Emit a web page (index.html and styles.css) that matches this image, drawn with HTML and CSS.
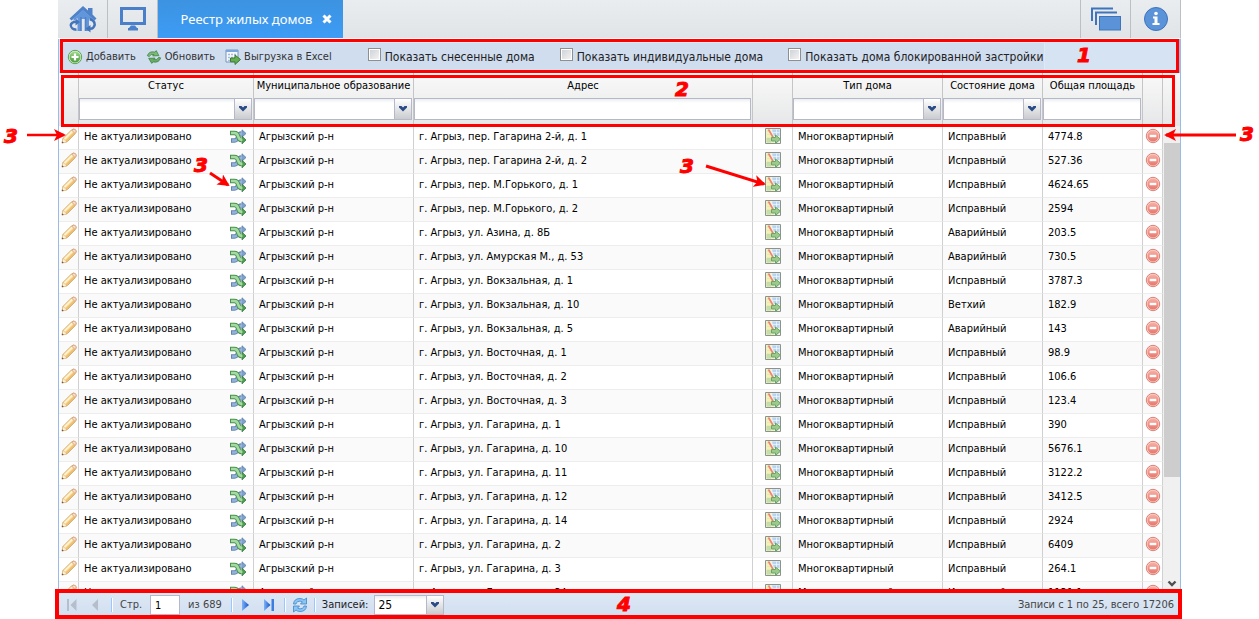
FILE: index.html
```
<!DOCTYPE html>
<html lang="ru">
<head>
<meta charset="utf-8">
<title>Реестр жилых домов</title>
<link rel="stylesheet" href="styles.css">
</head>
<body>
<svg class="defs" aria-hidden="true">
  <defs>
    <linearGradient id="gGreen" x1="0" y1="0" x2="0" y2="1"><stop offset="0" stop-color="#a5d893"/><stop offset="1" stop-color="#4c9a3e"/></linearGradient>
    <linearGradient id="gRed" x1="0" y1="0" x2="0" y2="1"><stop offset="0" stop-color="#f8b0a6"/><stop offset="1" stop-color="#e8776b"/></linearGradient>
    <linearGradient id="gBlue" x1="0" y1="0" x2="1" y2="0"><stop offset="0" stop-color="#7fb4f8"/><stop offset="1" stop-color="#1550c8"/></linearGradient>
    <marker id="head" viewBox="0 0 12 12" refX="10" refY="6" markerWidth="12" markerHeight="12" markerUnits="userSpaceOnUse" orient="auto"><path d="M0 0L12 6L0 12L3 6Z" fill="#f00"/></marker>
    <symbol id="pencil" viewBox="0 0 16 16"><path d="M1 15L2 10.500L10.500 2Q12.500 .3 14.500 1.800Q16 3.500 14.300 5.500L6 13.800Z" fill="#f5d08c" stroke="#cfa060"/><path d="M3.500 11L11.300 3.200" stroke="#fff3cd" stroke-width="2"/><path d="M5.500 13L13.300 5.200" stroke="#eebb6b" stroke-width="1.200"/><path d="M10.800 2.200L14 5.300L15 4.300Q15.500 2.500 13.800 1.300Q12.200 .8 10.800 2.200Z" fill="#f8dccb" stroke="#d0a080" stroke-width=".7"/><path d="M1 15L2 11L5.300 14Z" fill="#fdf0dc"/><path d="M.8 15.200L1.300 13.200L2.800 14.700Z" fill="#6b543c"/></symbol>
    <symbol id="shuffle" viewBox="0 0 16 16"><path d="M1 11.500H4.500Q7 11.500 8 8Q9 4.500 11.500 4.500" fill="none" stroke="#6484b0" stroke-width="4.400"/><path d="M12 .8L16 4.500L12 8.200Z" fill="#7da0cc" stroke="#5d7eab" stroke-width=".8"/><path d="M2 11.500H4.500Q7 11.500 8 8Q9 4.500 12.500 4.500" fill="none" stroke="#94b2da" stroke-width="2.600"/><path d="M0 4H4.500Q7.300 4 8.200 7.500Q9 11 11.500 11" fill="none" stroke="#4a9151" stroke-width="4.400"/><path d="M12 7.200L16 11L12 14.800Z" fill="#4b9f52" stroke="#357a3d" stroke-width=".8"/><path d="M1 4H4.500Q7.300 4 8.200 7.500Q9 11 12.500 11" fill="none" stroke="#a3dba0" stroke-width="2.600"/></symbol>
    <symbol id="map" viewBox="0 0 16 16"><path d="M.5.5H15.500V15.500H.5Z" fill="#f1f3e4" stroke="#8b938f"/><path d="M1.500 1.500H5L9 14.500H1.500Z" fill="#eeeaa5"/><path d="M7 1.500H14.500V8H9Z" fill="#b9d3f2"/><path d="M1.500 10H6V14.500H1.500Z" fill="#c5dda7"/><path d="M8 4.500H14.500M11.500 1.500V8M1.500 5H5M1.500 8H6" stroke="#fff" stroke-opacity=".6"/><path d="M3.500 1.500L8.500 10" stroke="#ee8374" stroke-width="1.600"/><path d="M6.500 9.500H10.500V7L15.500 11.200L10.500 15.400V13H6.500Z" fill="#9cc98e" stroke="#6ba565"/></symbol>
    <symbol id="remove" viewBox="0 0 16 16"><circle cx="8" cy="8" r="6.700" fill="#f8d0ca" stroke="#d9837a"/><circle cx="8" cy="8" r="5.500" fill="url(#gRed)"/><rect x="4.700" y="6.800" width="6.600" height="2.400" fill="#fff"/></symbol>
    <symbol id="chev" viewBox="0 0 16 16"><path d="M4 5H6.500L8 6.500L9.500 5H12V6.500L8 10.500L4 6.500Z" fill="#2a4b87"/></symbol>
  </defs>
</svg>

<main class="app">
  <nav class="tabs">
    <button class="tab" aria-label="Главная"><svg width="30" height="28" viewBox="0 0 30 28"><path d="M1.500 13.500L15 1L20 5.500V3H24.500V9.500L28.500 13.500L26.500 15.500L15 5.500L3.500 15.500Z" fill="#4f82c8"/><path d="M5.500 13.500L15 5L24.500 13.500V16L21 13V26H17.500V14H13V26H9.500V13L5.500 16Z" fill="#6296dc"/><path d="M13 12V26M17.500 12V26" stroke="#4f82c8" stroke-width="1.600"/><path d="M8.500 23.500Q3.500 23 4 20Q5 18 7.500 18V20.500L12 17L7.500 13.500V15.500Q2 16 1.500 20Q2 25.500 8.500 26Z" fill="#4475bb"/><path d="M21.500 12.500Q28.500 14.500 28 20Q26.500 25 22.500 25V27.500L17.500 23.500L22.500 20V22.500Q25 22 25.500 19.500Q25 16 21.500 15.500Z" fill="#4475bb"/></svg></button>
    <button class="tab" aria-label="Рабочий стол"><svg width="28" height="26" viewBox="0 0 28 26"><path d="M2.500 2.500H25.500V17.500H2.500Z" fill="none" stroke="#4a7fc9" stroke-width="3"/><path d="M12 19.500H16L18 22H19V24.500H9V22H10Z" fill="#4a7fc9"/></svg></button>
    <button class="tab active">Реестр жилых домов<svg width="10" height="10" viewBox="0 0 10 10"><path d="M1.500 1.500L8.500 8.500M8.500 1.500L1.500 8.500" stroke="#fff" stroke-width="3"/></svg></button>
    <span class="grow"></span>
    <button class="tab right" aria-label="Окна"><svg width="30" height="24" viewBox="0 0 30 24"><path d="M1 14V1.500H22M5 18V5.500H26" fill="none" stroke="#3f74bd" stroke-width="2"/><rect x="8.500" y="9.500" width="21" height="13.500" fill="#5b93d8" stroke="#3f74bd"/></svg></button>
    <button class="tab right" aria-label="Справка"><svg width="24" height="24" viewBox="0 0 24 24"><circle cx="12" cy="12" r="11.500" fill="#5b93d9" stroke="#3d72bd"/><circle cx="12" cy="6.500" r="1.800" fill="#fff"/><path d="M9 9.500H13.500V16H15.500V18H8.500V16H10.500V11.500H9Z" fill="#fff"/></svg></button>
  </nav>

  <section class="toolbar">
    <div class="tools">
      <button><svg width="16" height="16" viewBox="0 0 16 16"><circle cx="8" cy="8" r="6.700" fill="#d8efd2" stroke="#5da34f"/><circle cx="8" cy="8" r="5.500" fill="url(#gGreen)"/><path d="M8 4.500V11.500M4.500 8H11.500" stroke="#fff" stroke-width="2.200"/></svg>Добавить</button>
      <button><svg width="16" height="16" viewBox="0 0 18 16"><path d="M1.500 6.500Q3.500 1 10 2.500L11.500 .8L14.500 6.500L7.500 6.800L9 5.200Q5.500 4 3.500 7.500Z" fill="#7dbb78" stroke="#3f8444" stroke-width=".9"/><path d="M16.500 9Q14.500 15 8 13.500L6.500 15.200L3 9.500L10.200 9.200L8.800 10.800Q12.500 12 14.500 8.200Z" fill="#68ad66" stroke="#3f8444" stroke-width=".9"/></svg>Обновить</button>
      <button><svg width="16" height="16" viewBox="0 0 16 16"><path d="M1 1H13V13H1Z" fill="#f5f9ff" stroke="#7594bd"/><path d="M1 2H13" stroke="#7ba5dc" stroke-width="2"/><path d="M3 5.500H11.500M3 8.500H11.500M3 11.500H11.500" stroke="#a8bbd6" stroke-width="1.400" stroke-dasharray="2 1"/><path d="M5.500 9H10V6L15.500 10.500L10 15.500V12.800H5.500Z" fill="#65ad51" stroke="#3c7b35"/></svg>Выгрузка в Excel</button>
      <label class="c1"><input type="checkbox">Показать снесенные дома</label>
      <label><input type="checkbox">Показать индивидуальные дома</label>
      <label><input type="checkbox">Показать дома блокированной застройки</label>
    </div>
  </section>

  <table class="grid head">
    <colgroup><col class="w20"><col class="w175"><col class="w160"><col><col class="w40"><col class="w150"><col class="w100"><col class="w100"><col class="w20"><col class="w17"></colgroup>
    <thead><tr>
      <th></th>
      <th><label for="f1">Статус</label><span class="combo"><input id="f1"><button aria-label="Открыть"><svg width="16" height="16"><use href="#chev"/></svg></button></span></th>
      <th><label for="f2">Муниципальное образование</label><span class="combo"><input id="f2"><button aria-label="Открыть"><svg width="16" height="16"><use href="#chev"/></svg></button></span></th>
      <th><label for="f3">Адрес</label><span class="combo"><input id="f3"></span></th>
      <th></th>
      <th><label for="f4">Тип дома</label><span class="combo"><input id="f4"><button aria-label="Открыть"><svg width="16" height="16"><use href="#chev"/></svg></button></span></th>
      <th><label for="f5">Состояние дома</label><span class="combo"><input id="f5"><button aria-label="Открыть"><svg width="16" height="16"><use href="#chev"/></svg></button></span></th>
      <th><label for="f6">Общая площадь</label><span class="combo"><input id="f6"></span></th>
      <th></th><th></th>
    </tr></thead>
  </table>

  <div class="viewport">
    <table class="grid body">
      <colgroup><col class="w20"><col class="w175"><col class="w160"><col><col class="w40"><col class="w150"><col class="w100"><col class="w100"><col class="w20"></colgroup>
      <tbody id="rows"></tbody>
    </table>
    <div class="scroll"><span class="thumb"></span><svg width="16" height="14" viewBox="0 0 16 14"><path d="M4.500 5.500L8 9L11.500 5.500" fill="none" stroke="#505050" stroke-width="2.400"/></svg></div>
  </div>

  <footer class="pager">
    <button class="p1" aria-label="Первая"><svg width="16" height="16" viewBox="0 0 16 16"><path d="M3 2H5V14H3ZM12.500 2V14L6.500 8Z" fill="#b5bfcb"/></svg></button>
    <button class="p2" aria-label="Назад"><svg width="16" height="16" viewBox="0 0 16 16"><path d="M11 2V14L5 8Z" fill="#b5bfcb"/></svg></button>
    <i></i>
    <label class="page" for="pg">Стр.</label><input id="pg" value="1"><span class="of">из 689</span>
    <i></i>
    <button class="p3" aria-label="Вперёд"><svg width="16" height="16" viewBox="0 0 16 16"><path d="M5 2V14L12 8Z" fill="url(#gBlue)"/></svg></button>
    <button class="p3 last" aria-label="Последняя"><svg width="16" height="16" viewBox="0 0 16 16"><path d="M3 2V14L9.500 8Z" fill="url(#gBlue)"/><path d="M10.500 2H13V14H10.500Z" fill="#3d7de0"/></svg></button>
    <i></i>
    <button class="p4" aria-label="Обновить"><svg width="16" height="16" viewBox="0 0 16 16"><path d="M1.500 7Q2 1.500 8 1.500Q10.500 1.500 12 3L14.500 1V7H8.500L10.400 4.900Q8 3.500 5.800 4.600Q4.200 5.500 4 7Z" fill="#8cc4f2" stroke="#3b86cb" stroke-width=".8"/><path d="M14.500 9Q14 14.500 8 14.500Q5.500 14.500 4 13L1.500 15V9H7.500L5.600 11.100Q8 12.500 10.200 11.400Q11.800 10.500 12 9Z" fill="#8cc4f2" stroke="#3b86cb" stroke-width=".8"/></svg></button>
    <i></i>
    <label class="size" for="ps">Записей:</label>
    <span class="combo small"><input id="ps" value="25"><button aria-label="Открыть"><svg width="16" height="16"><use href="#chev"/></svg></button></span>
    <span class="total">Записи с 1 по 25, всего 17206</span>
  </footer>

  <div class="frame f-tools"></div>
  <div class="frame f-head"></div>
  <div class="frame f-pager"></div>
  <span class="mark m1">1</span>
  <span class="mark m2">2</span>
  <span class="mark m3a">3</span>
  <span class="mark m3b">3</span>
  <span class="mark m3c">3</span>
  <span class="mark m3d">3</span>
  <span class="mark m4">4</span>
  <svg class="arrow a1" width="42" height="14"><path d="M0 7H37" stroke="#f00" stroke-width="2.500" marker-end="url(#head)"/></svg>
  <svg class="arrow a2" width="30" height="24"><path d="M3 5L21 17" stroke="#f00" stroke-width="3" marker-end="url(#head)"/></svg>
  <svg class="arrow a3" width="64" height="30"><path d="M2 4L60 22" stroke="#f00" stroke-width="3" marker-end="url(#head)"/></svg>
  <svg class="arrow a4" width="76" height="14"><path d="M74 7H4" stroke="#f00" stroke-width="3" marker-end="url(#head)"/></svg>
</main>
<script src="rows.js"></script>
</body>
</html>
```
FILE: styles.css
```
* { box-sizing: border-box; }
body { margin: 0; background: #fff; color: #000; font: 11px/14px "DejaVu Sans Condensed", "DejaVu Sans", sans-serif; }
button, input { font: inherit; color: inherit; margin: 0; }
button { border: 0; padding: 0; background: none; display: flex; align-items: center; }
svg { display: block; flex: none; }
.defs { position: absolute; width: 0; height: 0; }
.app { position: relative; display: flex; flex-direction: column; height: 100vh; margin: 0 78px 0 58px; }
.grow { flex: 1; }

.tabs { display: flex; height: 39px; flex: none; background: linear-gradient(#e9edf0, #e0e4e6); border-bottom: 1px solid #fff; border-right: 1px solid #bcc0c3; }
.tab { width: 50px; justify-content: center; border-right: 1px solid #bcc0c3; }
.tab.active { width: 185px; gap: 10px; padding-left: 12px; border: 0; color: #fff; font: 13px/18px "Noto Sans", sans-serif; background: linear-gradient(#3c93e0, #3d9cf6); }
.tab.right { border-right: 0; border-left: 1px solid #bcc0c3; }

.toolbar { flex: none; height: 34px; padding: 3px 0 2px; background: #d6e3f2; border: solid #99bbe8; border-width: 0 2px 0 1px; }
.tools { display: flex; align-items: center; height: 29px; width: 986px; padding-left: 7px; background: #d0ddef; border: 1px solid #dfe8f5; color: #333; }
.tools button { gap: 3px; margin-right: 10px; white-space: nowrap; }
.tools label { display: flex; align-items: center; gap: 4px; margin-right: 25px; color: #222; white-space: nowrap; font-size: 12px; }
.tools input { appearance: none; width: 13px; height: 13px; margin-bottom: 5px; border: 1px solid #8e8f8f; outline: 1px solid #fff; outline-offset: -2px; background: linear-gradient(135deg, #cbcfd5, #f6f6f6); }
.tools .c1 { margin-left: 26px; }

.grid { table-layout: fixed; width: 100%; border-collapse: separate; border-spacing: 0; }
.w17 { width: 17px; }
.w20 { width: 20px; }
.w40 { width: 40px; }
.w100 { width: 100px; }
.w150 { width: 150px; }
.w160 { width: 160px; }
.w175 { width: 175px; }
.head { flex: none; height: 53px; border: solid #99bbe8; border-width: 0 1px; }
.head th { padding: 6px 0 0; vertical-align: top; font-weight: normal; background: linear-gradient(#f9f9f9, #e6e7e8); border-right: 1px solid #c5c5c5; white-space: nowrap; }
.head th:last-child { border-right: 0; }
.head label { display: block; margin-bottom: 5px; text-align: center; }
.combo { display: flex; height: 22px; margin: 0 1px 0 0; }
.combo input { flex: 1; min-width: 0; padding: 0 3px; background: linear-gradient(#eceef0, #fff 4px); border: 1px solid #b5b8c8; }
.combo button { width: 17px; border: solid #b5b8c8; border-width: 1px 1px 1px 0; background: linear-gradient(#fff, #c9cbce); }
.combo input:focus { outline: 0; }

.viewport { flex: 1; min-height: 0; display: flex; overflow: hidden; border: solid #99bbe8; border-width: 0 1px; }
.body { flex: 1; align-self: flex-start; width: 0; }
.body td { height: 24px; padding: 2px 5px 4px; vertical-align: middle; border-right: 1px solid #d0d0d0; border-bottom: 1px solid #ededed; white-space: nowrap; overflow: hidden; }
.body tr:nth-child(even) { background: #fafafa; }
.body td.ico { padding: 1px 1px 5px 2px; }
.body td.map { padding-left: 12px; }
.status { display: flex; justify-content: space-between; align-items: center; padding-right: 2px; }
.scroll { width: 17px; padding-left: 1px; background: #f0f0f0; display: flex; flex-direction: column; justify-content: space-between; }
.thumb { height: 334px; margin-top: 17px; background: #cdcdcd; }

.pager { flex: none; display: flex; align-items: center; height: 29px; padding: 1px 7px 0 6px; color: #444; background: linear-gradient(#dfe9f5, #d0def0); white-space: nowrap; }
.pager i { width: 1px; height: 14px; background: #98c8ff; border-right: 1px solid #fff; box-sizing: content-box; }
.pager > input { width: 30px; height: 20px; padding: 0 4px; color: #000; background: #fff; border: 1px solid #b5b8c8; }
.p1 { margin-right: 7px; }
.p2 { margin-right: 8px; }
.page { margin: 0 8px 0 7px; }
.of { margin: 0 9px 0 8px; }
.p3 { margin: 0 4px; }
.last { margin-right: 7px; }
.p4 { margin: 0 6px; }
.size { margin: 0 6px; color: #222; }
.small { width: 70px; height: 20px; color: #000; font-size: 12px; }
.total { margin-left: auto; }

.frame { position: absolute; border: 3px solid #f00; pointer-events: none; }
.f-tools { left: 2px; right: 2px; top: 39px; height: 34px; }
.f-head { left: 3px; right: 6px; top: 75px; height: 52px; }
.f-pager { left: -3px; right: -1px; bottom: 0; height: 30px; border-width: 4px; }
.mark { position: absolute; color: #f00; font: italic bold 20px/20px "DejaVu Sans", sans-serif; -webkit-text-stroke: 1px #f00; }
.m1 { right: 90px; top: 45px; }
.m2 { left: 617px; top: 79px; }
.m3a { left: -54px; top: 126px; }
.m3b { left: 136px; top: 155px; }
.m3c { left: 622px; top: 156px; }
.m3d { right: -73px; top: 124px; }
.m4 { left: 559px; bottom: 5px; }
.arrow { position: absolute; }
.a1 { left: -31px; top: 128px; }
.a2 { left: 149px; top: 168px; }
.a3 { left: 646px; top: 162px; }
.a4 { right: -57px; top: 128px; }
```
FILE: rows.js
```
const houses = [
  ["пер. Гагарина 2-й, д. 1", "Исправный", "4774.8"],
  ["пер. Гагарина 2-й, д. 2", "Исправный", "527.36"],
  ["пер. М.Горького, д. 1", "Исправный", "4624.65"],
  ["пер. М.Горького, д. 2", "Исправный", "2594"],
  ["ул. Азина, д. 8Б", "Аварийный", "203.5"],
  ["ул. Амурская М., д. 53", "Аварийный", "730.5"],
  ["ул. Вокзальная, д. 1", "Исправный", "3787.3"],
  ["ул. Вокзальная, д. 10", "Ветхий", "182.9"],
  ["ул. Вокзальная, д. 5", "Аварийный", "143"],
  ["ул. Восточная, д. 1", "Исправный", "98.9"],
  ["ул. Восточная, д. 2", "Исправный", "106.6"],
  ["ул. Восточная, д. 3", "Исправный", "123.4"],
  ["ул. Гагарина, д. 1", "Исправный", "390"],
  ["ул. Гагарина, д. 10", "Исправный", "5676.1"],
  ["ул. Гагарина, д. 11", "Исправный", "3122.2"],
  ["ул. Гагарина, д. 12", "Исправный", "3412.5"],
  ["ул. Гагарина, д. 14", "Исправный", "2924"],
  ["ул. Гагарина, д. 2", "Исправный", "6409"],
  ["ул. Гагарина, д. 3", "Исправный", "264.1"],
  ["ул. Гагарина, д. 3А", "Исправный", "1131.1"]
];
const icon = (name) => `<svg width="16" height="16"><use href="#${name}"/></svg>`;
document.getElementById("rows").innerHTML = houses.map(([address, state, area]) => `<tr>
  <td class="ico"><button aria-label="Изменить">${icon("pencil")}</button></td>
  <td><div class="status">Не актуализировано<button aria-label="Сменить статус">${icon("shuffle")}</button></div></td>
  <td>Агрызский р-н</td>
  <td>г. Агрыз, ${address}</td>
  <td class="ico map"><button aria-label="На карте">${icon("map")}</button></td>
  <td>Многоквартирный</td>
  <td>${state}</td>
  <td>${area}</td>
  <td class="ico"><button aria-label="Удалить">${icon("remove")}</button></td>
</tr>`).join("");
```
